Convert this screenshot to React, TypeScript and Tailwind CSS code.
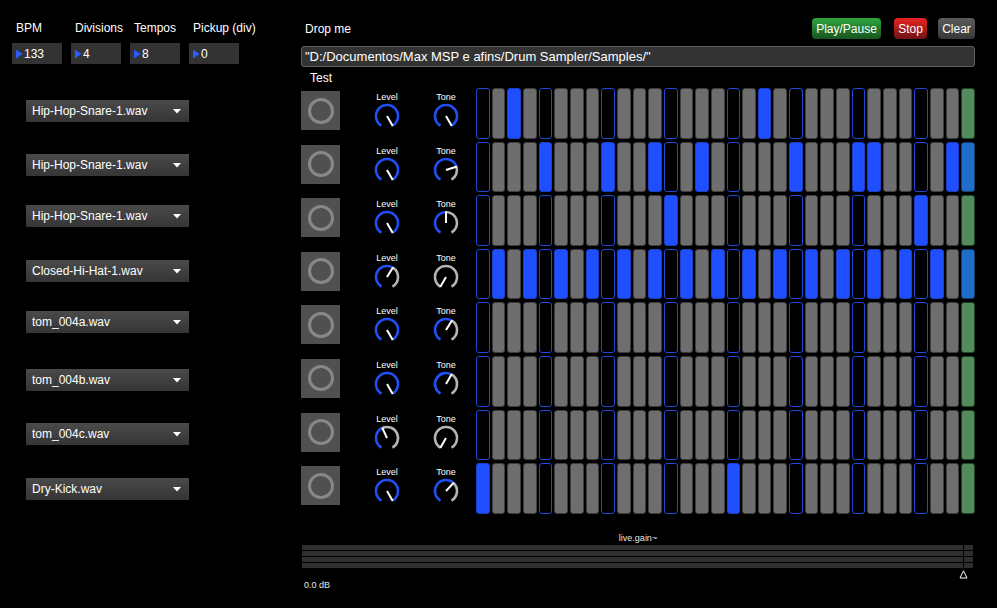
import React from 'react';

const TOP_FIELDS = [
  { label: 'BPM', value: '133' },
  { label: 'Divisions', value: '4' },
  { label: 'Tempos', value: '8' },
  { label: 'Pickup (div)', value: '0' }
];

// sample menus down the left side, spacing is not regular in the patch
const SAMPLES = [
  { name: 'Hip-Hop-Snare-1.wav', mt: 'mt-[36px]' },
  { name: 'Hip-Hop-Snare-1.wav', mt: 'mt-[32px]' },
  { name: 'Hip-Hop-Snare-1.wav', mt: 'mt-[29px]' },
  { name: 'Closed-Hi-Hat-1.wav', mt: 'mt-[33px]' },
  { name: 'tom_004a.wav', mt: 'mt-[29px]' },
  { name: 'tom_004b.wav', mt: 'mt-[36px]' },
  { name: 'tom_004c.wav', mt: 'mt-[32px]' },
  { name: 'Dry-Kick.wav', mt: 'mt-[33px]' }
];

const ODDS = Array.from({ length: 16 }, (_, i) => i * 2 + 1);

const TRACKS = [
  { level: 150, tone: 150, steps: [2, 18] },
  { level: 150, tone: 72, steps: [4, 8, 11, 14, 20, 24, 25, 30, 31] },
  { level: 150, tone: 0, steps: [12, 28] },
  { level: 32, tone: -150, steps: ODDS },
  { level: 150, tone: 32, steps: [] },
  { level: 150, tone: 30, steps: [] },
  { level: -25, tone: -150, steps: [] },
  { level: 150, tone: 43, steps: [0, 16] }
];

const polar = (a: number, r: number) => {
  const rad = (a * Math.PI) / 180;
  return [14 + r * Math.sin(rad), 14 - r * Math.cos(rad)];
};

const arc = (a1: number, a2: number, r: number) => {
  const [x1, y1] = polar(a1, r);
  const [x2, y2] = polar(a2, r);
  const large = a2 - a1 > 180 ? 1 : 0;
  return `M ${x1} ${y1} A ${r} ${r} 0 ${large} 1 ${x2} ${y2}`;
};

function Knob({ label, angle }: { label: string; angle: number }) {
  const [px, py] = polar(angle, 11.5);
  return (
    <div className="w-[40px] flex flex-col items-center pt-[4px]">
      <div className="text-[9px] leading-[11px] h-[11px]">{label}</div>
      <svg width="28" height="28" viewBox="0 0 28 28" className="-mt-[1px]">
        {angle < 150 && <path d={arc(angle, 150, 11)} fill="none" stroke="#b4b4b4" strokeWidth="2.6" />}
        {angle > -150 && <path d={arc(-150, angle, 11)} fill="none" stroke="#1f4ff5" strokeWidth="2.6" />}
        <line x1="14" y1="14" x2={px} y2={py} stroke="#ffffff" strokeWidth="2" />
      </svg>
    </div>
  );
}

function Cell({ index, on }: { index: number; on: boolean }) {
  let cls = 'bg-[#6e6e6e] border-[#3e3e3e]';
  if (index === 31) {
    cls = on ? 'bg-[#1e6dc8] border-[#173f6a]' : 'bg-[#558a5e] border-[#1d4a24]';
  } else if (on) {
    cls = 'bg-[#1f4fff] border-[#1b3fc4]';
  } else if (index % 4 === 0) {
    cls = 'bg-black border-[#2048d8]';
  }
  return <div className={`flex-1 rounded-[3px] border ${cls}`} />;
}

export default function App() {
  return (
    <div className="w-[997px] h-[608px] bg-black text-white flex font-['Liberation_Sans',Arial,sans-serif] overflow-hidden">
      {/* left side: transport numbers + sample menus */}
      <div className="w-[301px] shrink-0">
        <div className="flex gap-[9px] pl-[12px] pt-[21px]">
          {TOP_FIELDS.map(f => (
            <div key={f.label} className="w-[50px]">
              <div className="text-[12px] leading-[14px] pl-[4px] whitespace-nowrap">{f.label}</div>
              <div className="mt-[8px] h-[21px] bg-[#333333] flex items-center">
                <svg width="7" height="10" viewBox="0 0 7 10" className="ml-[4px]">
                  <polygon points="0,0.5 6.5,5 0,9.5" fill="#2a5cff" />
                </svg>
                <span className="text-[12px] ml-[1px]">{f.value}</span>
              </div>
            </div>
          ))}
        </div>
        <div className="flex flex-col pl-[26px]">
          {SAMPLES.map((s, i) => (
            <div
              key={i}
              className={`${s.mt} w-[163px] h-[22px] bg-gradient-to-b from-[#4a4a4a] to-[#353535] flex items-center justify-between pl-[6px] pr-[8px]`}
            >
              <span className="text-[12px]">{s.name}</span>
              <svg width="8" height="5" viewBox="0 0 8 5">
                <polygon points="0,0 8,0 4,4.5" fill="#ffffff" />
              </svg>
            </div>
          ))}
        </div>
      </div>

      {/* right side: header, sequencer, gain */}
      <div className="w-[674px] shrink-0 pt-[18px]">
        <div className="h-[21px] flex items-center justify-between">
          <span className="text-[12px] pl-[4px]">Drop me</span>
          <div className="flex items-center">
            <button className="h-[21px] w-[69px] rounded-[4px] bg-gradient-to-b from-[#2fa53e] to-[#17561f] text-[12px]">Play/Pause</button>
            <button className="ml-[13px] h-[21px] w-[33px] rounded-[4px] bg-gradient-to-b from-[#ea2222] to-[#6e1414] text-[12px]">Stop</button>
            <button className="ml-[11px] h-[21px] w-[37px] rounded-[4px] bg-gradient-to-b from-[#5c5c5c] to-[#383838] text-[12px]">Clear</button>
          </div>
        </div>
        <div className="mt-[7px] h-[21px] rounded-[3px] border border-[#5e5e5e] bg-[#333333] flex items-center pl-[3px] text-[13px] whitespace-nowrap">
          "D:/Documentos/Max MSP e afins/Drum Sampler/Samples/"
        </div>
        <div className="mt-[4px] h-[14px] leading-[14px] pl-[9px] text-[12px]">Test</div>

        <div className="mt-[3px] flex flex-col gap-[3px]">
          {TRACKS.map((t, r) => (
            <div key={r} className="h-[50.6px] flex">
              <div className="w-[39px] h-[39px] mt-[3px] bg-[#505050] flex items-center justify-center">
                <svg width="28" height="28" viewBox="0 0 28 28">
                  <circle cx="14" cy="14" r="11.5" fill="none" stroke="#888888" strokeWidth="3" />
                </svg>
              </div>
              <div className="ml-[27px]">
                <Knob label="Level" angle={t.level} />
              </div>
              <div className="ml-[19px]">
                <Knob label="Tone" angle={t.tone} />
              </div>
              <div className="ml-[10px] w-[499px] flex gap-[2px]">
                {Array.from({ length: 32 }, (_, c) => (
                  <Cell key={c} index={c} on={t.steps.includes(c)} />
                ))}
              </div>
            </div>
          ))}
        </div>

        {/* live.gain~ */}
        <div className="mt-[19px] h-[10px] leading-[10px] text-[9px] text-center text-[#e6e6e6]">live.gain~</div>
        <div className="relative mt-[2px] ml-[1px] w-[671px]">
          <div className="flex flex-col gap-[1px]">
            {[0, 1, 2, 3].map(b => (
              <div key={b} className="h-[5px] bg-[#2f2f2f]" />
            ))}
          </div>
          <div className="absolute top-0 left-[661px] w-[1px] h-[23px] bg-black" />
          <svg width="9" height="9" viewBox="0 0 9 9" className="absolute top-[25px] left-[657px]">
            <polygon points="4.5,0.8 8,8 1,8" fill="none" stroke="#ffffff" strokeWidth="1" />
          </svg>
        </div>
        <div className="mt-[12px] pl-[3px] text-[9px] leading-[10px] text-[#e6e6e6]">0.0 dB</div>
      </div>
    </div>
  );
}
